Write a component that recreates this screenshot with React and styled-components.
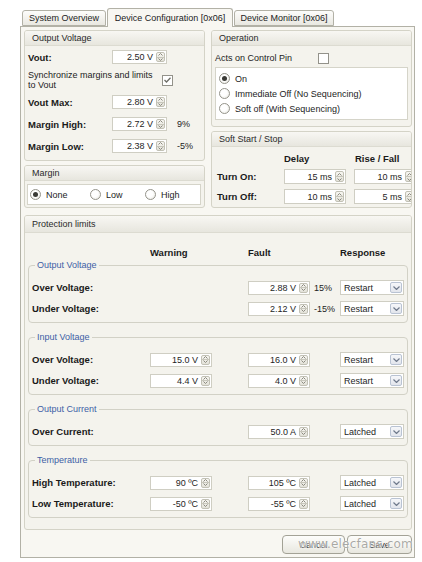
import React from 'react'
import styled, { createGlobalStyle } from 'styled-components'

const GlobalStyle = createGlobalStyle`
  html, body {
    margin: 0;
    padding: 0;
    background: #fff;
  }
  body {
    font-family: "Liberation Sans", Arial, sans-serif;
    font-size: 9px;
    color: #1c1c1c;
  }
`

const Window = styled.div`
  width: 395px;
  margin: 8px 0 0 20px;
`

const TabStrip = styled.div`
  display: flex;
  align-items: flex-end;
  height: 18px;
  padding-left: 2px;
  position: relative;
  z-index: 2;
`

const Tab = styled.div`
  box-sizing: border-box;
  width: ${p => p.$w}px;
  height: ${p => (p.$active ? 19 : 16)}px;
  margin-right: 1px;
  margin-bottom: ${p => (p.$active ? -1 : 0)}px;
  padding-top: ${p => (p.$active ? 3 : 1)}px;
  border: 1px solid #b2b1a6;
  border-bottom: ${p => (p.$active ? 'none' : '1px solid #b2b1a6')};
  border-radius: 3px 3px 0 0;
  background: ${p => (p.$active ? '#f8f7f2' : 'linear-gradient(#fdfdfb, #e9e8e1)')};
  text-align: center;
  line-height: 12px;
  white-space: nowrap;
  color: #222;
`

const Panel = styled.div`
  position: relative;
  box-sizing: border-box;
  height: 532px;
  padding: 3px 2px 0 3px;
  border: 1px solid #b2b1a6;
  background: #f8f7f2;
  display: flex;
  flex-direction: column;
`

const TopGrid = styled.div`
  display: grid;
  grid-template-columns: 181px 201px;
  column-gap: 6px;
`

const Column = styled.div`
  display: flex;
  flex-direction: column;
  gap: 4px;
`

const Group = styled.div`
  border: 1px solid #d4d3c7;
  border-radius: 3px;
  background: #f4f3ed;
  overflow: hidden;
`

const GroupHeader = styled.div`
  box-sizing: border-box;
  height: ${p => p.$h || 15}px;
  padding-left: 7px;
  display: flex;
  align-items: center;
  border-bottom: 1px solid #dcdbd1;
  background: linear-gradient(#f8f7f3, #e7e6de);
  color: #2a2a2a;
`

const Body = styled.div`
  padding: ${p => p.$pad || '0'};
`

const FormRow = styled.div`
  display: grid;
  grid-template-columns: 84px 55px auto;
  align-items: center;
  height: ${p => p.$h || 14}px;
  margin-top: ${p => p.$mt || 0}px;
`

const Label = styled.span`
  font-weight: bold;
  font-size: 9.5px;
  color: #1a1a1a;
  white-space: nowrap;
`

const Suffix = styled.span`
  margin-left: 10px;
  color: #222;
`

const SyncRow = styled.div`
  display: flex;
  align-items: center;
  height: 20px;
  margin-top: 6px;
`

const SyncText = styled.span`
  width: 125px;
  line-height: 10px;
`

const Field = styled.div`
  box-sizing: border-box;
  display: flex;
  width: ${p => p.$w}px;
  height: ${p => p.$h}px;
  background: #fff;
  border: 1px solid #cfcec3;
`

const FieldValue = styled.span`
  flex: 1;
  display: flex;
  align-items: center;
  justify-content: flex-end;
  padding-right: 3px;
  white-space: nowrap;
  color: #1e1e1e;
`

const SpinBox = styled.div`
  box-sizing: border-box;
  width: 9px;
  margin: 1px 1px 1px 0;
  display: flex;
  flex-direction: column;
  border: 1px solid #c2c1b5;
  border-radius: 2px;
  background: linear-gradient(#f7f6f1, #e3e2d9);
`

const SpinHalf = styled.div`
  flex: 1;
  display: flex;
  align-items: center;
  justify-content: center;
  & + & {
    border-top: 1px solid #c8c7bc;
  }
`

const Check = styled.div`
  box-sizing: border-box;
  width: 11px;
  height: 11px;
  margin-left: ${p => p.$ml || 0}px;
  border: 1px solid #93928a;
  background: #fff;
  display: flex;
  align-items: center;
  justify-content: center;
`

const WhiteBox = styled.div`
  box-sizing: border-box;
  background: #fff;
  border: 1px solid #d5d4c9;
  display: flex;
  flex-direction: ${p => (p.$row ? 'row' : 'column')};
  align-items: ${p => (p.$row ? 'center' : 'stretch')};
  height: ${p => p.$h}px;
  margin-top: ${p => p.$mt || 0}px;
  padding: ${p => p.$pad || '0'};
`

const RadioItem = styled.div`
  display: flex;
  align-items: center;
  gap: 5px;
  height: ${p => (p.$h ? p.$h + 'px' : 'auto')};
  width: ${p => (p.$w ? p.$w + 'px' : 'auto')};
  white-space: nowrap;
`

const RadioDot = styled.span`
  box-sizing: border-box;
  width: 11px;
  height: 11px;
  border-radius: 50%;
  border: 1px solid #95948b;
  background: radial-gradient(circle at 40% 40%, #fff 40%, #e6e5dd);
  display: flex;
  align-items: center;
  justify-content: center;
  &::after {
    content: '';
    width: 5px;
    height: 5px;
    border-radius: 50%;
    background: ${p => (p.$on ? '#3a3a36' : 'transparent')};
  }
`

const ActsRow = styled.div`
  display: flex;
  align-items: center;
  height: 14px;
`

const ActsText = styled.span`
  width: 103px;
`

const SoftGrid = styled.div`
  display: grid;
  grid-template-columns: 59px 62px 62px;
  grid-template-rows: 12px 15px 15px;
  column-gap: 8px;
  row-gap: 5px;
  align-items: center;
  padding: 5px 0 3px 5px;
`

const ColHead = styled.span`
  font-weight: bold;
  font-size: 9.5px;
  color: #1a1a1a;
  padding-left: ${p => p.$pl || 0}px;
`

const ProtGroup = styled(Group)`
  margin-top: 7px;
`

const LimitGrid = styled.div`
  display: grid;
  grid-template-columns: 118px 98px 62px 30px 64px;
  align-items: center;
  height: ${p => p.$h || 14}px;
`

const HeadRow = styled(LimitGrid)`
  margin-top: 13px;
  padding-left: 7px;
`

const SetList = styled.div`
  display: flex;
  flex-direction: column;
  gap: 9px;
  padding: 2px 3px 11px 3px;
`

const Set = styled.fieldset`
  margin: 0;
  min-width: 0;
  padding: 10px 3px 7px 3px;
  border: 1px solid #d2d1c6;
  border-radius: 4px;
`

const Legend = styled.legend`
  margin-left: 3px;
  padding: 0 2px;
  line-height: 10px;
  color: #3e5fa6;
`

const SetRows = styled.div`
  display: flex;
  flex-direction: column;
  gap: 7px;
`

const Pct = styled.span`
  padding-left: 4px;
  color: #222;
`

const Select = styled.div`
  box-sizing: border-box;
  width: 64px;
  height: 15px;
  display: flex;
  align-items: center;
  justify-content: space-between;
  padding: 0 1px 0 3px;
  background: #fff;
  border: 1px solid #cfcec3;
  color: #1e1e1e;
`

const DropButton = styled.span`
  box-sizing: border-box;
  width: 12px;
  height: 11px;
  display: flex;
  align-items: center;
  justify-content: center;
  border: 1px solid #b9c3d3;
  border-radius: 2px;
  background: linear-gradient(#f6f7fa, #e2e5ec);
`

const ButtonRow = styled.div`
  display: flex;
  justify-content: flex-end;
  gap: 2px;
  margin-top: 5px;
`

const Button = styled.div`
  box-sizing: border-box;
  width: ${p => p.$w}px;
  height: 19px;
  display: flex;
  align-items: center;
  justify-content: center;
  border: 1px solid #a3a296;
  border-radius: 4px;
  background: linear-gradient(#fdfdfb, #e8e7df);
  color: #222;
`

const Watermark = styled.div`
  position: absolute;
  left: 277px;
  top: 510px;
  font-family: "DejaVu Sans", sans-serif;
  font-size: 12px;
  letter-spacing: 0.2px;
  color: rgba(140, 140, 135, 0.75);
  text-shadow: 0 0 2px #fff, 0 0 1px #fff;
  pointer-events: none;
`

function Chevron({ up, color = '#8a897f' }) {
  const pts = up ? '0.5,2.5 2.5,0.5 4.5,2.5' : '0.5,0.5 2.5,2.5 4.5,0.5'
  return (
    <svg width="5" height="3" viewBox="0 0 5 3">
      <polyline points={pts} fill="none" stroke={color} strokeWidth="1" />
    </svg>
  )
}

function Spin({ w = 55, h = 14, value }) {
  return (
    <Field $w={w} $h={h}>
      <FieldValue>{value}</FieldValue>
      <SpinBox>
        <SpinHalf><Chevron up /></SpinHalf>
        <SpinHalf><Chevron /></SpinHalf>
      </SpinBox>
    </Field>
  )
}

function Radio({ on, children, w, h }) {
  return (
    <RadioItem $w={w} $h={h}>
      <RadioDot $on={on} />
      <span>{children}</span>
    </RadioItem>
  )
}

function Dropdown({ value }) {
  return (
    <Select>
      <span>{value}</span>
      <DropButton>
        <svg width="7" height="4" viewBox="0 0 7 4">
          <polyline points="0.5,0.5 3.5,3.5 6.5,0.5" fill="none" stroke="#6f7a8c" strokeWidth="1.2" />
        </svg>
      </DropButton>
    </Select>
  )
}

const limits = [
  {
    title: 'Output Voltage',
    rows: [
      { label: 'Over Voltage:', fault: '2.88 V', pct: '15%', resp: 'Restart' },
      { label: 'Under Voltage:', fault: '2.12 V', pct: '-15%', resp: 'Restart' },
    ],
  },
  {
    title: 'Input Voltage',
    rows: [
      { label: 'Over Voltage:', warn: '15.0 V', fault: '16.0 V', resp: 'Restart' },
      { label: 'Under Voltage:', warn: '4.4 V', fault: '4.0 V', resp: 'Restart' },
    ],
  },
  {
    title: 'Output Current',
    rows: [{ label: 'Over Current:', fault: '50.0 A', resp: 'Latched' }],
  },
  {
    title: 'Temperature',
    rows: [
      { label: 'High Temperature:', warn: '90 ºC', fault: '105 ºC', resp: 'Latched' },
      { label: 'Low Temperature:', warn: '-50 ºC', fault: '-55 ºC', resp: 'Latched' },
    ],
  },
]

export default function App() {
  return (
    <>
      <GlobalStyle />
      <Window>
        <TabStrip>
          <Tab $w={84}>System Overview</Tab>
          <Tab $w={126} $active>Device Configuration [0x06]</Tab>
          <Tab $w={100}>Device Monitor [0x06]</Tab>
        </TabStrip>
        <Panel>
          <TopGrid>
            <Column>
              <Group>
                <GroupHeader>Output Voltage</GroupHeader>
                <Body $pad="4px 3px 7px 3px">
                  <FormRow>
                    <Label>Vout:</Label>
                    <Spin value="2.50 V" />
                  </FormRow>
                  <SyncRow>
                    <SyncText>Synchronize margins and limits to Vout</SyncText>
                    <Check $ml={9}>
                      <svg width="7" height="6" viewBox="0 0 7 6">
                        <polyline points="0.5,3 2.5,5 6.5,0.8" fill="none" stroke="#6d6d66" strokeWidth="1.3" />
                      </svg>
                    </Check>
                  </SyncRow>
                  <FormRow $mt={5}>
                    <Label>Vout Max:</Label>
                    <Spin value="2.80 V" />
                  </FormRow>
                  <FormRow $mt={8}>
                    <Label>Margin High:</Label>
                    <Spin value="2.72 V" />
                    <Suffix>9%</Suffix>
                  </FormRow>
                  <FormRow $mt={8}>
                    <Label>Margin Low:</Label>
                    <Spin value="2.38 V" />
                    <Suffix>-5%</Suffix>
                  </FormRow>
                </Body>
              </Group>
              <Group>
                <GroupHeader>Margin</GroupHeader>
                <Body $pad="3px 3px 2px 2px">
                  <WhiteBox $row $h={21} $pad="0 0 0 2px">
                    <Radio on w={60}>None</Radio>
                    <Radio w={55}>Low</Radio>
                    <Radio>High</Radio>
                  </WhiteBox>
                </Body>
              </Group>
            </Column>
            <Column>
              <Group>
                <GroupHeader>Operation</GroupHeader>
                <Body $pad="5px 3px 6px 3px">
                  <ActsRow>
                    <ActsText>Acts on Control Pin</ActsText>
                    <Check />
                  </ActsRow>
                  <WhiteBox $h={53} $mt={2} $pad="3px 0 0 3px">
                    <Radio on h={15}>On</Radio>
                    <Radio h={15}>Immediate Off (No Sequencing)</Radio>
                    <Radio h={15}>Soft off (With Sequencing)</Radio>
                  </WhiteBox>
                </Body>
              </Group>
              <Group>
                <GroupHeader>Soft Start / Stop</GroupHeader>
                <SoftGrid>
                  <span />
                  <ColHead>Delay</ColHead>
                  <ColHead $pl={1}>Rise / Fall</ColHead>
                  <Label>Turn On:</Label>
                  <Spin w={62} h={15} value="15 ms" />
                  <Spin w={62} h={15} value="10 ms" />
                  <Label>Turn Off:</Label>
                  <Spin w={62} h={15} value="10 ms" />
                  <Spin w={62} h={15} value="5 ms" />
                </SoftGrid>
              </Group>
            </Column>
          </TopGrid>

          <ProtGroup>
            <GroupHeader $h={17}>Protection limits</GroupHeader>
            <HeadRow $h={12}>
              <span />
              <ColHead>Warning</ColHead>
              <ColHead>Fault</ColHead>
              <span />
              <ColHead>Response</ColHead>
            </HeadRow>
            <SetList>
              {limits.map(set => (
                <Set key={set.title}>
                  <Legend>{set.title}</Legend>
                  <SetRows>
                    {set.rows.map(r => (
                      <LimitGrid key={r.label}>
                        <Label>{r.label}</Label>
                        <div>{r.warn && <Spin w={62} value={r.warn} />}</div>
                        <Spin w={62} value={r.fault} />
                        <Pct>{r.pct || ''}</Pct>
                        <Dropdown value={r.resp} />
                      </LimitGrid>
                    ))}
                  </SetRows>
                </Set>
              ))}
            </SetList>
          </ProtGroup>

          <ButtonRow>
            <Button $w={63}>Cancel</Button>
            <Button $w={65}>Save</Button>
          </ButtonRow>
          <Watermark>www.elecfans.com</Watermark>
        </Panel>
      </Window>
    </>
  )
}
